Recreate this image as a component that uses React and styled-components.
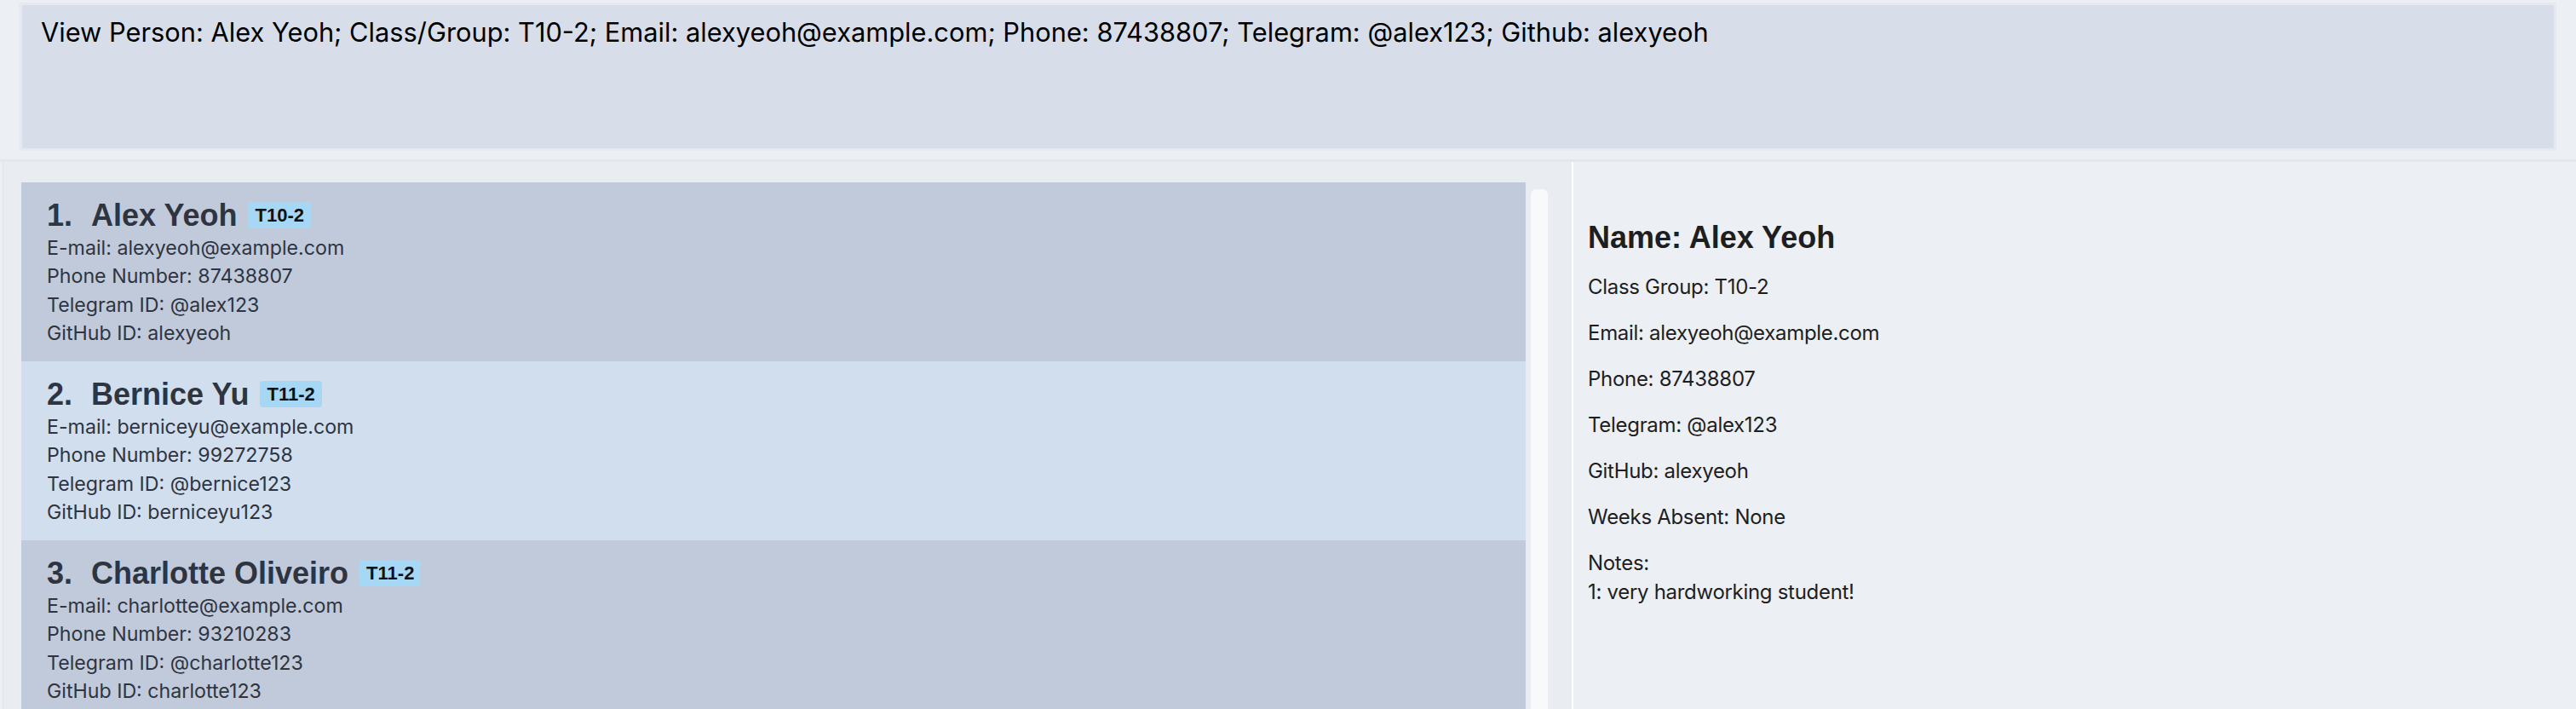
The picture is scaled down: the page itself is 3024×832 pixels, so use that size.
import React from "react";
import styled, { createGlobalStyle } from "styled-components";

const people = [
  {
    name: "Alex Yeoh",
    group: "T10-2",
    email: "alexyeoh@example.com",
    phone: "87438807",
    telegram: "@alex123",
    github: "alexyeoh"
  },
  {
    name: "Bernice Yu",
    group: "T11-2",
    email: "berniceyu@example.com",
    phone: "99272758",
    telegram: "@bernice123",
    github: "berniceyu123"
  },
  {
    name: "Charlotte Oliveiro",
    group: "T11-2",
    email: "charlotte@example.com",
    phone: "93210283",
    telegram: "@charlotte123",
    github: "charlotte123"
  }
];

const GlobalStyle = createGlobalStyle`
  html, body {
    margin: 0;
    padding: 0;
    background: #eceff4;
  }
  * {
    box-sizing: border-box;
  }
`;

const App = () => (
  <Window>
    <GlobalStyle />
    <ResultFrame>
      <ResultBox>
        View Person: Alex Yeoh; Class/Group: T10-2; Email: alexyeoh@example.com;
        Phone: 87438807; Telegram: @alex123; Github: alexyeoh
      </ResultBox>
    </ResultFrame>
    <MainArea>
      <ListPanel>
        <CardList>
          {people.map((p, i) => (
            <PersonCard key={p.name} odd={i % 2 === 0}>
              <NameRow>
                <Name>
                  <Index>{i + 1}.</Index>
                  {p.name}
                </Name>
                <GroupTag>{p.group}</GroupTag>
              </NameRow>
              <Field>E-mail: {p.email}</Field>
              <Field>Phone Number: {p.phone}</Field>
              <Field>Telegram ID: {p.telegram}</Field>
              <Field>GitHub ID: {p.github}</Field>
            </PersonCard>
          ))}
        </CardList>
        <ScrollTrack>
          <ScrollThumb />
        </ScrollTrack>
      </ListPanel>
      <DetailPanel>
        <DetailTitle>Name: Alex Yeoh</DetailTitle>
        <DetailLine>Class Group: T10-2</DetailLine>
        <DetailLine>Email: alexyeoh@example.com</DetailLine>
        <DetailLine>Phone: 87438807</DetailLine>
        <DetailLine>Telegram: @alex123</DetailLine>
        <DetailLine>GitHub: alexyeoh</DetailLine>
        <DetailLine>Weeks Absent: None</DetailLine>
        <DetailLine>
          Notes:
          <br />
          1: very hardworking student!
        </DetailLine>
      </DetailPanel>
    </MainArea>
  </Window>
);

export default App;

const Window = styled.div`
  height: 832px;
  overflow: hidden;
  display: flex;
  flex-direction: column;
  background: #eceff4;
`;

const ResultFrame = styled.div`
  margin: 3px 23px 0 22px;
  padding: 3px 3px 3px 4px;
  background: #e6eaf0;
`;

const ResultBox = styled.div`
  height: 168px;
  padding: 14px 22px;
  background: #d8dee9;
  color: #000;
  font-family: Inter, "Liberation Sans", sans-serif;
  font-size: 30.8px;
  line-height: 36px;
`;

const MainArea = styled.div`
  flex: 1;
  min-height: 0;
  display: flex;
  margin-top: 10px;
  border-top: 3px solid #e3e7ed;
`;

const ListPanel = styled.div`
  width: 1842px;
  display: flex;
  padding: 24px 0 0 21px;
  margin-left: 3px;
  border-left: 1px solid #e2e6ec;
  background: #e9edf2;
`;

const CardList = styled.div`
  width: 1766px;
  display: flex;
  flex-direction: column;
`;

const PersonCard = styled.div`
  height: 210px;
  flex-shrink: 0;
  padding: 18px 30px 0;
  background: ${p => (p.odd ? "#c0cadb" : "#d0deee")};
  color: #2e3440;
`;

const NameRow = styled.div`
  display: flex;
  align-items: center;
  gap: 13px;
  height: 41px;
  margin-bottom: 2px;
`;

const Name = styled.div`
  font-family: "Liberation Sans", Arial, sans-serif;
  font-weight: bold;
  font-size: 36px;
  white-space: nowrap;
`;

const Index = styled.span`
  margin-right: 22px;
`;

const GroupTag = styled.span`
  height: 31px;
  display: flex;
  align-items: center;
  padding: 0 8px;
  border-radius: 4px;
  background: #a6d8f5;
  color: #111;
  font-family: "Liberation Sans", Arial, sans-serif;
  font-weight: bold;
  font-size: 22px;
`;

const Field = styled.div`
  font-family: Inter, "Liberation Sans", sans-serif;
  font-size: 23.2px;
  line-height: 33.4px;
`;

const ScrollTrack = styled.div`
  width: 20px;
  margin-left: 6px;
  padding-top: 8px;
`;

const ScrollThumb = styled.div`
  height: 100%;
  border-radius: 6px 6px 0 0;
  background: #f8f9fb;
`;

const DetailPanel = styled.div`
  flex: 1;
  padding: 68px 17px 0;
  border-left: 2px solid #ffffff;
  background: #eceff4;
  color: #1e1e1e;
`;

const DetailTitle = styled.div`
  font-family: "Liberation Sans", Arial, sans-serif;
  font-weight: bold;
  font-size: 36px;
  line-height: 41px;
  margin-bottom: 21px;
`;

const DetailLine = styled.div`
  font-family: Inter, "Liberation Sans", sans-serif;
  font-size: 24px;
  line-height: 34px;
  letter-spacing: -0.3px;
  margin-bottom: 20px;
`;
